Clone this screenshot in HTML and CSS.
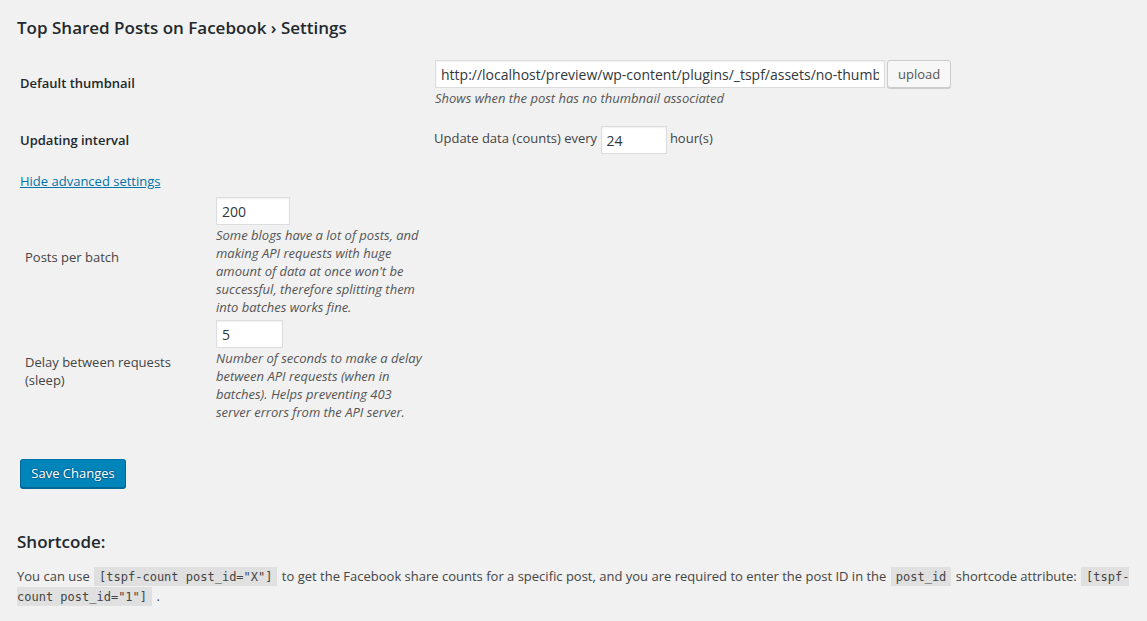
FILE: index.html
```html
<!DOCTYPE html>
<html>
<head>
<meta charset="utf-8">
<link rel="stylesheet" href="styles.css">
</head>
<body>
<div class="wrap">
  <h2 class="page-title">Top Shared Posts on Facebook › Settings</h2>
  <form class="settings">
    <table class="form-table">
      <tr class="row-thumb">
        <th>Default thumbnail</th>
        <td>
          <div class="upload-line">
            <input class="text-input url-input" type="text" value="http://localhost/preview/wp-content/plugins/_tspf/assets/no-thumb.png">
            <button type="button" class="button">upload</button>
          </div>
          <p class="description">Shows when the post has no thumbnail associated</p>
        </td>
      </tr>
      <tr class="row-interval">
        <th>Updating interval</th>
        <td class="interval-cell">Update data (counts) every <input class="text-input hours-input" type="text" value="24"> hour(s)</td>
      </tr>
    </table>

    <p class="toggle"><a href="#" class="toggle-link">Hide advanced settings</a></p>

    <table class="advanced">
      <tr>
        <td class="adv-label">Posts per batch</td>
        <td class="adv-field">
          <input class="text-input batch-input" type="text" value="200">
          <p class="description">Some blogs have a lot of posts, and making API requests with huge amount of data at once won't be successful, therefore splitting them into batches works fine.</p>
        </td>
      </tr>
      <tr>
        <td class="adv-label">Delay between requests (sleep)</td>
        <td class="adv-field">
          <input class="text-input sleep-input" type="text" value="5">
          <p class="description">Number of seconds to make a delay between API requests (when in batches). Helps preventing 403 server errors from the API server.</p>
        </td>
      </tr>
    </table>

    <p class="submit"><button type="button" class="button-primary">Save Changes</button></p>
  </form>

  <h3 class="section-title">Shortcode:</h3>
  <p class="para">You can use <code>[tspf-count post_id="X"]</code> to get the Facebook share counts for a specific post, and you are required to enter the post ID in the <code>post_id</code> shortcode attribute: <code>[tspf-count post_id="1"]</code> .</p>
</div>
</body>
</html>
```
FILE: styles.css
```css
html, body {
  margin: 0;
  padding: 0;
}
body {
  background: #f1f1f1;
  color: #444;
  font-family: "Open Sans", "Liberation Sans", sans-serif;
  font-size: 13px;
  line-height: 1.4em;
}
.wrap {
  padding: 0 8px 0 17px;
}
.page-title {
  margin: 0;
  padding: 16px 0 0 0;
  font-size: 17px;
  font-weight: 600;
  line-height: 24px;
  color: #23282d;
}
.settings {
  margin: 0;
}
.form-table {
  border-collapse: separate;
  border-spacing: 0 19px;
  margin-top: 1px;
  margin-left: 3px;
}
.form-table th {
  width: 401px;
  text-align: left;
  vertical-align: middle;
  font-weight: 600;
  color: #23282d;
  padding: 0 10px 0 0;
}
.form-table td {
  padding: 0 0 0 4px;
  vertical-align: middle;
}
.form-table .interval-cell {
  padding-left: 3px;
}
.upload-line {
  display: flex;
  align-items: center;
  gap: 2px;
}
.text-input {
  font-family: "Open Sans", "Liberation Sans", sans-serif;
  font-size: 14px;
  color: #32373c;
  background: #fff;
  border: 1px solid #ddd;
  box-shadow: inset 0 1px 2px rgba(0,0,0,.07);
  padding: 3px 5px;
  height: 28px;
  box-sizing: border-box;
  margin: 0;
  border-radius: 0;
  outline: none;
  vertical-align: middle;
}
.url-input {
  width: 450px;
}
.hours-input {
  width: 66px;
}
.batch-input {
  width: 74px;
}
.sleep-input {
  width: 67px;
}
.button {
  font-family: "Open Sans", "Liberation Sans", sans-serif;
  font-size: 13px;
  color: #555;
  background: #f7f7f7;
  border: 1px solid #ccc;
  box-shadow: 0 1px 0 #ccc;
  border-radius: 3px;
  height: 28px;
  padding: 0 10px 1px;
  line-height: 26px;
  margin: -1px 0 0 0;
}
.description {
  margin: 1px 0 0 0;
  font-style: italic;
  color: #555;
  line-height: 18px;
}
.toggle {
  margin: -1px 0 0 3px;
  line-height: 18px;
}
.toggle-link {
  color: #0073aa;
  text-decoration: underline;
}
.advanced {
  margin-top: 4px;
  margin-left: 3px;
  border-spacing: 2px;
}
.advanced td {
  padding: 1px;
}
.adv-label {
  width: 187px;
  vertical-align: middle;
  padding-left: 3px !important;
  line-height: 18px;
}
.adv-field {
  width: 210px;
  vertical-align: top;
}
.adv-field .description {
  margin-top: 1px;
}
.submit {
  margin: 35px 0 0 3px;
}
.button-primary {
  font-family: "Open Sans", "Liberation Sans", sans-serif;
  font-size: 13px;
  color: #fff;
  background: #0085ba;
  border: 1px solid #0073aa;
  border-color: #0073aa #006799 #006799;
  box-shadow: 0 1px 0 #006799;
  text-shadow: 0 -1px 1px #006799, 1px 0 1px #006799, 0 1px 1px #006799, -1px 0 1px #006799;
  border-radius: 3px;
  height: 29px;
  width: 106px;
  padding: 0 10px 1px;
  line-height: 26px;
}
.section-title {
  margin: 42px 0 0 0;
  font-size: 17px;
  font-weight: 600;
  color: #23282d;
  line-height: 24px;
}
.para {
  margin: 13px 0 0 0;
  line-height: 19px;
}
code {
  font-family: "DejaVu Sans Mono", "Liberation Mono", monospace;
  font-size: 12px;
  background: rgba(0,0,0,.07);
  padding: 3px 5px 2px;
  margin: 0 1px;
  color: #444;
}
```
